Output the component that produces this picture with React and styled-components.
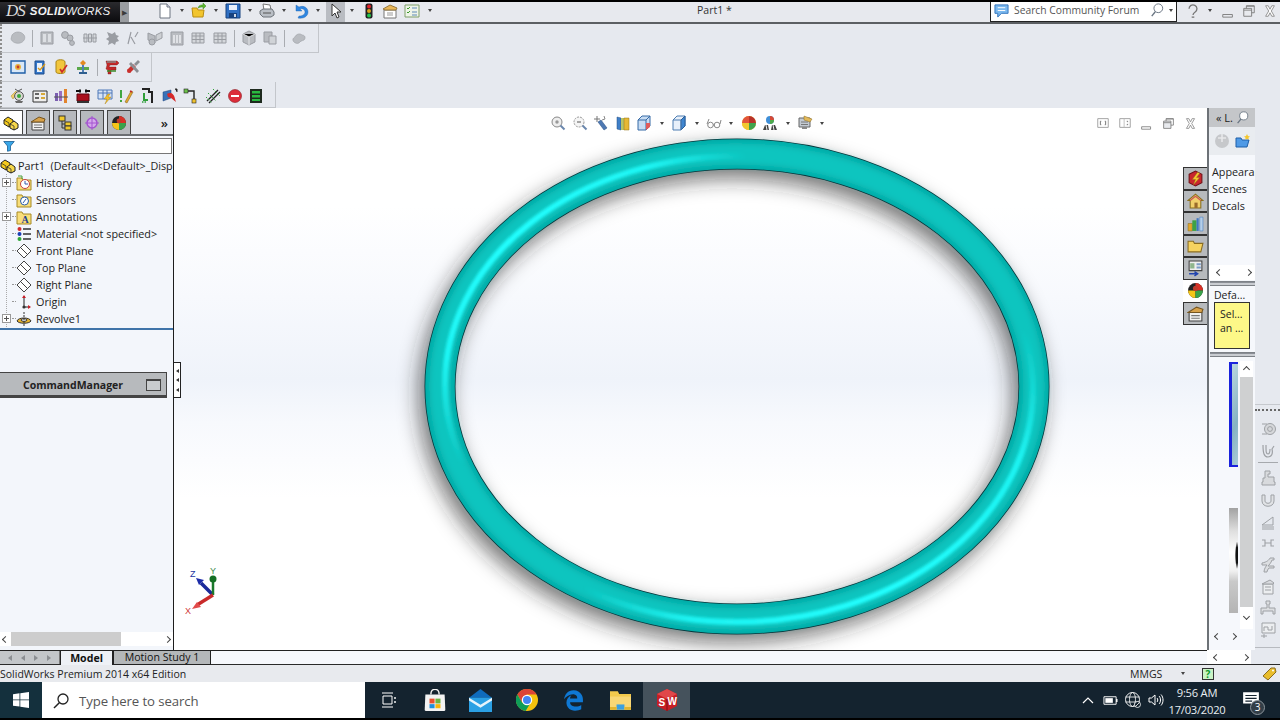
import React from 'react';
import styled, { createGlobalStyle } from 'styled-components';
import { FaEdgeLegacy } from 'react-icons/fa';

const Global = createGlobalStyle`
  html, body { margin: 0; padding: 0; background: #000; }
  * { box-sizing: border-box; }
`;

const ui = `"Open Sans", "Noto Sans", "Liberation Sans", sans-serif`;

const Page = styled.div`
  width: 1280px; height: 720px; overflow: hidden; display: flex; flex-direction: column;
  background: #e6e9ef; font-family: ${ui}; font-size: 11px; color: #1c1c1c;
`;
const Letterbox = styled.div`height: 2px; flex: none; background: #000;`;

/* ---------- title bar ---------- */
const TitleBar = styled.header`
  height: 22px; flex: none; display: flex; align-items: stretch; background: #e7e9ee;
  border-bottom: 2px solid #5c5f63; position: relative;
`;
const Brand = styled.div`
  width: 120px; background: linear-gradient(#2a2a2e, #0b0b0e); color: #f2f2f2; display: flex; align-items: center;
  padding: 0 0 2px 6px; gap: 5px; font-family: "Liberation Sans", sans-serif; font-style: italic; white-space: nowrap;
`;
const BrandMark = styled.span`font-family: "Liberation Serif", serif; font-size: 17px; letter-spacing: -1px; color: #ddd;`;
const BrandName = styled.span`font-size: 11.5px; font-weight: 400; letter-spacing: .2px; b { font-weight: 700; }`;
const BrandHandle = styled.div`
  width: 9px; background: #9a9da1; color: #3b3b3b; display: flex; align-items: center; justify-content: center; font-size: 7px;
`;
const Quick = styled.div`display: flex; align-items: center; margin-left: 27px;`;
const Cell = styled.div`
  width: ${p => p.$w || 17}px; height: 20px; flex: none; display: flex; align-items: center; justify-content: center;
  padding-bottom: 3px; background: ${p => p.$on ? '#b9bcc2' : 'transparent'};
`;
const Caret = styled.span`
  width: 0; height: 0; border-left: 2.5px solid transparent; border-right: 2.5px solid transparent;
  border-top: 3px solid #444; flex: none;
`;
const DocName = styled.div`
  position: absolute; left: 697px; top: 1px; font-size: 10.5px; color: #333;
`;
const TitleRight = styled.div`margin-left: auto; display: flex; align-items: center;`;
const Search = styled.div`
  width: 187px; height: 20px; background: #fff; border: 1px solid #222; border-top: none; display: flex; align-items: center;
  padding: 0 3px 3px 3px; margin-right: 5px; font-size: 10.3px; color: #555; gap: 5px; white-space: nowrap;
`;
const SearchText = styled.span`flex: 1;`;
const WinBtn = styled.div`width: 21px; height: 20px; padding-bottom: 3px; display: flex; justify-content: center; align-items: center;`;

/* ---------- toolbars ---------- */
const Toolbars = styled.section`height: 84px; flex: none; display: flex; flex-direction: column; background: #e6e9ef;`;
const ToolRow = styled.div`
  height: ${p => p.$h || 29}px; width: ${p => p.$w}px; display: flex; align-items: center; padding-left: 5px;
  padding-top: ${p => p.$pt || 0}px;
  border-right: 1px solid #c3c6cb; border-bottom: 1px solid #c3c6cb;
  border-left: 2px dotted #8d8d8d; background-clip: padding-box;
`;
const ToolBtn = styled.div`width: 21.7px; height: 22px; flex: none; display: flex; align-items: center; justify-content: center;`;
const ToolSep = styled.div`width: 1px; height: 17px; background: #a9acb1; margin: 0 3px; flex: none;`;

/* ---------- work area ---------- */
const Work = styled.main`height: 542px; flex: none; display: flex;`;

const Manager = styled.aside`
  width: 174px; flex: none; background: #f3f6fb; border-right: 1px solid #1d1d1d; display: flex; flex-direction: column;
`;
const MgrTabs = styled.div`
  height: 28px; flex: none; background: #e6e9ef; border-bottom: 2px solid #6b6e72; border-top: 1px solid #a8abb0;
  display: flex; align-items: flex-end; padding-right: 4px; gap: 3px;
`;
const MgrTab = styled.div`
  width: ${p => p.$on ? 23 : 24}px; height: 24px; display: flex; align-items: center; justify-content: center;
  background: ${p => p.$on ? '#fff' : '#b6b9bd'}; border: 1px solid #444; border-left: ${p => p.$on ? 'none' : '1px solid #444'};
  border-bottom: none;
`;
const MgrMore = styled.div`margin-left: auto; align-self: center; font-size: 13px; font-weight: 600; color: #222; padding-right: 1px; line-height: 1; margin-top: 3px;`;
const Filter = styled.div`
  height: 16px; margin: 2px 1px 0 0; flex: none; background: #fff; border: 1px solid #777; border-left: none; padding-left: 3px;
  display: flex; align-items: center;
`;
const Tree = styled.div`
  margin-top: 3px; border-bottom: 2px solid #3f74a9;
  background: linear-gradient(#aaa 50%, transparent 50%) 6px 17px / 1px 2px repeat-y;
  height: 173px;
`;
const Row = styled.div`
  height: 17px; display: flex; align-items: center; padding-left: ${p => p.$root ? 0 : 1}px; white-space: nowrap; overflow: hidden;
  font-size: 10.8px; color: #222; background: ${p => p.$root ? '#f3f6fb' : 'transparent'};
`;
const ExpCell = styled.div`width: 11px; flex: none; display: flex; justify-content: center;`;
const Plus = styled.div`
  width: 9px; height: 9px; background: #fff; border: 1px solid #999;
  background-image: linear-gradient(#555,#555), linear-gradient(#555,#555);
  background-size: 5px 1px, 1px 5px; background-position: center; background-repeat: no-repeat;
`;
const Stub = styled.div`width: 4px; flex: none; border-top: 1px dotted #999;`;
const RowIcon = styled.div`width: 16px; height: 16px; flex: none; margin-right: 4px; display: flex;`;
const RootIcon = styled.div`width: 16px; height: 16px; flex: none; margin-right: 2px; display: flex;`;
const CmdBar = styled.div`
  margin-top: 42px; width: 167px; height: 26px; flex: none; background: #b7babd; border: 1px solid #444; border-left: none;
  border-bottom-width: 3px; display: flex; align-items: center; font-weight: 700; font-size: 10.5px; color: #222; padding-top: 1px;
`;
const CmdLabel = styled.span`width: 146px; text-align: center;`;
const CmdIcon = styled.div`width: 15px; height: 12px; border: 1px solid #444; border-top-width: 2px; background: #c9ccce;`;
const Filler = styled.div`flex: 1;`;
const HScroll = styled.div`
  height: 14px; margin-bottom: 4px; flex: none; background: #fff; display: flex; align-items: center; justify-content: space-between;
`;
const Thumb = styled.div`width: 110px; height: 14px; background: #cdcdcd; margin-left: -42px;`;
const Chev = styled.span`
  width: 5px; height: 5px; border-left: 1.5px solid #444; border-bottom: 1.5px solid #444; flex: none; display: block;
  transform: rotate(${p => p.$dir === 'r' ? 225 : p.$dir === 'u' ? 135 : p.$dir === 'd' ? -45 : 45}deg);
  margin: 0 3px;
`;

const Canvas = styled.section`
  flex: 1; position: relative; min-width: 0;
  background: linear-gradient(#fff 0, #fff 18%, #f7f9fd 35%, #eff3fa 50%, #f7f9fd 58%, #fff 72%, #fff 100%);
`;
const Scene = styled.svg`display: block; width: 100%; height: 100%;`;
const HudBar = styled.div`position: absolute; left: 373px; top: 6px; display: flex; align-items: center;`;
const HudBtn = styled.div`
  width: ${p => p.$w || 21.8}px; height: 18px; flex: none; display: flex; align-items: center; justify-content: center;
`;
const ViewCtl = styled.div`position: absolute; right: 6px; top: 6px; display: flex; align-items: center;`;
const ViewBtn = styled.div`width: 21.8px; height: 18px; display: flex; align-items: center; justify-content: center;`;
const Triad = styled.svg`position: absolute; left: 10px; top: 457px;`;
const Notch = styled.div`
  position: absolute; left: 0; top: 254px; width: 7px; height: 36px; background: #fff; border: 1px solid #222; border-left: none;
  display: flex; flex-direction: column; justify-content: space-evenly; align-items: center;
`;
const NotchTri = styled.span`
  width: 0; height: 0; border-top: 2.5px solid transparent; border-bottom: 2.5px solid transparent; border-right: 3px solid #333;
`;
const PaneTabs = styled.div`position: absolute; right: 0; top: 59px; width: 24px; display: flex; flex-direction: column;`;
const PaneTab = styled.div`
  height: 22.5px; display: flex; align-items: center; justify-content: center;
  background: ${p => p.$on ? '#fff' : '#b7babd'}; border: 1px solid #333; border-right: none;
  ${p => p.$on && 'border-color: transparent;'}
`;

const Divider = styled.div`width: 2px; flex: none; background: #6d7277;`;
const Pane = styled.aside`width: 46px; flex: none; background: #f6f8fc; display: flex; flex-direction: column;`;
const PaneHead = styled.div`
  height: 19px; flex: none; background: #c4c6c9; display: flex; align-items: center; padding-left: 7px; color: #222;
  font-size: 11px; overflow: hidden; white-space: nowrap;
`;
const PaneTools = styled.div`height: 28px; flex: none; background: #e9ecf0; display: flex; align-items: center; gap: 5px; padding: 0 4px 0 5px;`;
const PaneList = styled.div`height: 110px; flex: none; padding: 8px 0 0 3px; overflow: hidden; white-space: nowrap;`;
const PaneItem = styled.div`height: 17px; line-height: 17px; font-size: 10.8px; color: #222;`;
const Pager = styled.div`
  height: ${p => p.$h || 15}px; flex: none; background: ${p => p.$bg || '#fff'}; display: flex; align-items: center;
  padding-left: ${p => p.$pl ?? 5}px; gap: ${p => p.$gap ?? 18}px;
`;
const Rule = styled.div`
  height: 5px; margin: ${p => p.$mt ?? 1}px 0 0 1px; flex: none;
  background: repeating-linear-gradient(#8a8e95 0 1px, #c9ccd1 1px 3px); border-top: 1px solid #7d8187; border-bottom: 1px solid #7d8187;
`;
const PaneTitle = styled.div`height: 16px; flex: none; padding: 3px 0 0 5px; font-size: 10.5px; line-height: 13px; color: #222;`;
const Hint = styled.div`
  height: 47px; width: 36px; flex: none; margin-left: 5px; padding: 4px 0 0 5px; background: #fdf888; border: 1px solid #333;
  font-size: 10.5px; line-height: 14px; color: #222;
`;
const Gallery = styled.div`height: 268px; flex: none; display: flex; margin-top: 4px;`;
const Thumbs = styled.div`width: 31px; flex: none; padding: 1px 0 0 20px; display: flex; flex-direction: column; gap: 41px;`;
const SwatchA = styled.div`
  width: 9px; height: 105px; flex: none; border: 2px solid #1a22dc; border-left-width: 3px; border-right: none;
  background: linear-gradient(115deg, #b9d6df, #86b3c4 60%, #a9ccd7);
`;
const SwatchB = styled.div`
  width: 9px; height: 105px; flex: none;
  background: radial-gradient(ellipse 2px 14px at 8px 45%, #111 60%, transparent 100%),
    linear-gradient(#a2a2a2, #dfdfdf 22%, #fff 42%, #f0f0f0 60%, #c9c9c9 70%, #b4b4b4);
`;
const VScroll = styled.div`width: 13px; flex: none; display: flex; flex-direction: column; align-items: center; background: #fff;`;
const VEnd = styled.div`height: ${p => p.$h}px; width: 100%; flex: none; display: flex; align-items: center; justify-content: center;`;
const VTrack = styled.div`height: 230px; width: 100%; flex: none; background: #cfd0d1;`;
const Strip = styled.aside`
  width: 25px; flex: none; background: #e6e9ef; display: flex; flex-direction: column; align-items: center;
`;
const StripTop = styled.div`height: 297px; width: 100%; flex: none; border-bottom: 1px solid #c6c9ce;`;
const StripDots = styled.div`height: 3px; width: 100%; margin: 4px 0 6px; flex: none; border-top: 2px dotted #666;`;
const StripBtn = styled.div`height: 21.7px; width: 100%; flex: none; display: flex; align-items: center; justify-content: center;`;
const StripSep = styled.div`height: 1px; width: 20px; flex: none; background: #a6a9ad; margin: 1px 0 4px;`;
const StripFoot = styled.div`margin-top: auto; margin-bottom: 2px; height: 1px; width: 100%; flex: none; background: #b7babf;`;

/* ---------- bottom ---------- */
const TabBar = styled.div`height: 15px; flex: none; display: flex; border-bottom: 1px solid #2a2a2a;`;
const Tabs = styled.div`width: 1207px; flex: none; display: flex; background: #f6f8fc; border-top: 1px solid #222;`;
const NavArrows = styled.div`width: 60px; flex: none; background: #c3c6c9; display: flex; align-items: center; justify-content: space-around; padding: 0 3px; border-right: 1px solid #777;`;
const NavTri = styled.span`
  width: 0; height: 0; border-top: 3px solid transparent; border-bottom: 3px solid transparent;
  ${p => p.$r ? 'border-left: 4px solid #8b8e92;' : 'border-right: 4px solid #8b8e92;'}
`;
const DocTab = styled.div`
  height: 14px; display: flex; align-items: center; justify-content: center; white-space: nowrap; font-size: 10.6px; line-height: 1;
  width: ${p => p.$w}px; flex: none; color: #111;
  background: ${p => p.$on ? '#eef1f6' : '#b4b7b9'}; font-weight: ${p => p.$on ? 700 : 400};
  border: 1px solid #222; border-top: none; ${p => p.$on ? 'border-bottom: none;' : ''}
`;
const Status = styled.footer`
  height: 17px; flex: none; background: #e8eaee; display: flex; align-items: center; font-size: 10.5px; color: #222; white-space: nowrap;
`;
const StatusText = styled.span`flex: 1;`;
const StatusUnit = styled.span`width: 51px;`;
const StatusHelp = styled.div`
  width: 12px; height: 12px; margin: 0 47px 0 17px; border: 1px solid #333; background: #c9f3c5; color: #0d9a2b; font-weight: 700;
  font-size: 10px; line-height: 10px; text-align: center;
`;
const StatusTag = styled.div`width: 16px; height: 16px; margin-right: 3px; flex: none;`;
const Taskbar = styled.nav`height: 36px; flex: none; background: #14232f; display: flex; align-items: stretch; color: #fff;`;
const Start = styled.div`width: 42px; flex: none; background: #14303d; display: flex; align-items: center; justify-content: center;`;
const SearchBox = styled.div`
  width: 323px; flex: none; background: #fff; display: flex; align-items: center; padding: 1px 0 0 11px; gap: 10px;
  color: #555; font-size: 13.2px; letter-spacing: -.1px; font-family: "Open Sans", sans-serif;
`;
const TaskApp = styled.div`
  width: 46.4px; flex: none; display: flex; align-items: center; justify-content: center;
  background: ${p => p.$on ? '#45525c' : 'transparent'};
`;
const Tray = styled.div`margin-left: auto; display: flex; align-items: stretch;`;
const TrayBtn = styled.div`width: 22.6px; flex: none; display: flex; align-items: center; justify-content: center;`;
const Clock = styled.div`
  width: 60px; margin-right: 6px; padding-top: 2px; text-align: center; font-size: 11.2px; letter-spacing: -.25px; line-height: 17px;
  color: #e9eef2; white-space: nowrap;
`;
const Notify = styled.div`width: 47px; flex: none; display: flex; align-items: center; justify-content: center; position: relative; padding-right: 11px;`;
const NotifyBadge = styled.span`
  position: absolute; left: 17px; top: 18px; width: 15px; height: 15px; border-radius: 50%; background: #333e47; border: 1px solid #8b949b;
  font-size: 10px; line-height: 13px; text-align: center; color: #fff;
`;

/* ---------- icons ---------- */
const Svg = styled.svg`display: block; flex: none;`;
const g = '#b9bcc1', gd = '#9a9da3';
const D = {
  page: <><path d="M3 1h7l3 3v11H3z" fill="#fff" stroke="#6c7480"/><path d="M10 1v3h3" fill="#dde" stroke="#6c7480"/></>,
  openf: <><path d="M1 5h5l1 2h6l-1 7H2z" fill="#f2c52e" stroke="#b98d12"/><path d="M7 5c1-3 3-3 5-3V0l3 3-3 3V4c-2 0-3 0-5 1z" fill="#5bb531" stroke="#3d8a1d" strokeWidth=".5"/></>,
  save: <><path d="M1 1h14v14H1z" fill="#2f6fc2" stroke="#17427f"/><path d="M4 2h8v5H4z" fill="#e9f0fa"/><path d="M4 10h8v5H4z" fill="#17427f"/><path d="M9 11h2v3H9z" fill="#cfd9e6"/></>,
  print: <><path d="M4 1l7 1 1 5H5z" fill="#fff" stroke="#777"/><path d="M1 8l3-2h9l2 3v3l-3 2H4l-3-3z" fill="#b9bec5" stroke="#6d7279"/><path d="M4 10h8" stroke="#555"/></>,
  undo: <path d="M3 2v6h6L7 6c3-1 5 1 5 3 0 2-2 4-6 4l-1 2c6 1 10-2 10-6 0-4-4-7-9-5z" fill="#2f86e0" stroke="#1c5fae" strokeWidth=".4"/>,
  cursor: <path d="M4 1v12l3-3 2 5 2-1-2-5h4z" fill="#fff" stroke="#333"/>,
  traffic: <><rect x="4.5" y="0.5" width="7" height="15" rx="2" fill="#222"/><circle cx="8" cy="3.5" r="2" fill="#e2242a"/><circle cx="8" cy="8" r="2" fill="#d9a21d"/><circle cx="8" cy="12.5" r="2" fill="#22c44a"/></>,
  options: <><path d="M2 7h12v8H2z" fill="#fff" stroke="#777"/><path d="M1 6l7-4 7 3-1 2H3z" fill="#e8b657" stroke="#94763a"/><path d="M5 10h6M5 12h6" stroke="#999"/></>,
  checklist: <><path d="M1 2h14v12H1z" fill="#eef4e8" stroke="#7ea06a"/><path d="M3 5l1 1 2-2M3 9l1 1 2-2" stroke="#3b9a2a" fill="none"/><path d="M8 5h5M8 9h5M8 12h5" stroke="#5c8ab8"/></>,
  chat: <><path d="M1 2h14v9H8l-4 4v-4H1z" fill="#7ab8ee" stroke="#2f72bd"/><path d="M4 5h8M4 8h8" stroke="#fff"/></>,
  mag: <><circle cx="9.5" cy="6" r="5" fill="#fff" stroke="#6a7683" strokeWidth="1.1"/><path d="M6 10l-4 5" stroke="#6a7683" strokeWidth="1.6"/></>,
  help: <><path d="M3.500 5.500a4.500 4.500 0 1 1 7 3.700C9 10.200 8 11 8 12.500" fill="none" stroke="#777" strokeWidth="1.500"/><path d="M6.500 15h3" stroke="#777" strokeWidth="1.500"/></>,
  min: <path d="M2 12h11v3H2z" fill="none" stroke="#777"/>,
  restore: <><path d="M5 2h9v8H5z" fill="none" stroke="#777"/><path d="M2 5h9v9H2z" fill="#e8eaee" stroke="#777"/><path d="M2 7h9M5 2.5h9" stroke="#777"/></>,
  close: <path d="M3 2l3 0 2 4 2-4h3l-3.5 6L13 14h-3l-2-4-2 4H3l3.5-6z" fill="#fff" stroke="#888"/>,

  gblob: <path d="M2 5c3-4 9-4 12 0 2 3 0 7-4 8-4 1-8-1-9-4z" fill={g} stroke={gd} strokeWidth=".6"/>,
  gpanel: <><path d="M2 2h12v12H2z" fill={g} stroke={gd}/><path d="M4 4h3v8H4zM9 4h3v8H9z" fill="#dcdfe3"/></>,
  ggears: <><circle cx="5" cy="5" r="3.4" fill={g} stroke={gd}/><circle cx="10" cy="8" r="3" fill={g} stroke={gd}/><circle cx="12" cy="13" r="2.4" fill={g} stroke={gd}/></>,
  gpins: <><path d="M2 4h3v8H2zM6.5 4h3v8h-3zM11 4h3v8h-3z" fill="#d4d7db" stroke={gd}/><path d="M1 8h14" stroke={gd}/></>,
  gburst: <path d="M3 2l5 2 3-2 1 3 3 1-2 2 2 3-3 1-1 3-3-2-4 2 1-4-3-2 3-2z" fill={gd}/>,
  gsketch: <path d="M3 14l3-12M6 7l4 7M13 2l-3 5" stroke={gd} fill="none" strokeWidth="1.2"/>,
  gwheel: <><path d="M1 3l7 3v7l-7-3z" fill={g} stroke={gd}/><path d="M9 5l6-3v6l-6 3z" fill="#cdd0d4" stroke={gd}/><circle cx="5" cy="12" r="3" fill={g} stroke={gd}/></>,
  gcols: <><path d="M2 2h12v13H2z" fill={g} stroke={gd}/><path d="M4 5h2v8H4zM7 5h2v8H7zM10 5h2v8h-2z" fill="#e0e2e6"/></>,
  gtable: <><path d="M2 3h12v10H2z" fill="#d4d7db" stroke={gd}/><path d="M2 6h12M2 9.5h12M6 3v10M10 3v10" stroke={gd}/></>,
  gcube: <><path d="M2 4l6-3 6 3v8l-6 3-6-3z" fill={g} stroke={gd}/><path d="M2 4l6 3 6-3M8 7v8" stroke="#e4e6e9"/></>,
  gcubes: <><path d="M2 2h8v10H2z" fill={g} stroke={gd}/><path d="M7 6h7v8H7z" fill="#d0d3d7" stroke={gd}/></>,
  gcloud: <path d="M3 12c-2-2-1-4 1-5 1-3 5-4 7-2 3 0 4 3 2 5-2 1-4 1-5 3-2 1-4 0-5-1z" fill={g} stroke={gd} strokeWidth=".6"/>,

  view: <><path d="M1 2h14v12H1z" fill="#d8e7f7" stroke="#1f5fa8" strokeWidth="1.4"/><circle cx="8" cy="8" r="3" fill="#e8b13a"/><circle cx="8" cy="8" r="1.4" fill="#c73c2c"/></>,
  clipb: <><path d="M3 2h9v13H3z" fill="#3477c9" stroke="#1a4b8a"/><path d="M5 4h5v9H5z" fill="#e9f1fb"/><path d="M6 9l2 2 5-6" stroke="#d89a1c" strokeWidth="1.4" fill="none"/></>,
  cyl: <><path d="M3 3c0-3 9-3 9 0v10c0 2-9 2-9 0z" fill="#f2c63d" stroke="#a98415"/><path d="M7 10l2 3 5-7" stroke="#cc2a2a" strokeWidth="1.6" fill="none"/></>,
  tree: <><path d="M8 1l3 3-3 3-3-3z" fill="#e28a22"/><path d="M7 6h2v8H7z" fill="#4f7fb7"/><path d="M2 8h5v3H2zM9 8h5v3H9z" fill="#5aa84a"/><path d="M4 13h8v2H4z" fill="#2f5f8f"/></>,
  redtool: <><path d="M2 2h11l2 2-2 2H6L5 8h7v3H7v4H4v-4l-2-1 1-4z" fill="#c52828" stroke="#731313" strokeWidth=".4"/><path d="M3 3h9" stroke="#888" strokeWidth="1.5"/><path d="M3 12l9 0" stroke="#3b8b2a" strokeWidth="1.5"/></>,
  wrench: <><path d="M2 11l6-6 3 3-6 6z" fill="#c9302c"/><path d="M9 5l4-4 2 2-4 4zM6 3l8 9-2 2-8-9z" fill="#8c8f94"/><circle cx="4" cy="12" r="2" fill="#c9302c"/></>,

  feat: <><path d="M1 8l5-5 1 2-4 6z" fill="#f0cf6a" stroke="#a88a2a" strokeWidth=".5"/><circle cx="9" cy="8" r="4.4" fill="#d9d9d2" stroke="#555"/><circle cx="9" cy="8" r="2" fill="#3aa63a"/><path d="M5 13h8l-1 2H6z" fill="#6a6a6a"/><path d="M5 1l3 2 4-2" stroke="#555" fill="none"/></>,
  form: <><path d="M1 3h14v11H1z" fill="#eee" stroke="#333"/><path d="M3 5h4v2H3zM3 9h4v2H3z" fill="#666"/><path d="M9 5h4v2H9zM9 9h4v2H9z" fill="#d7a93a"/></>,
  cols: <><path d="M2 5h3v8H2z" fill="#7b5fb0"/><path d="M6 3h3v10H6z" fill="#9a6fc0"/><path d="M11 1h3v14h-3z" fill="#e2832c"/><path d="M1 9h14" stroke="#555"/></>,
  redbox: <><path d="M2 6h12v7H2z" fill="#a90f1c" stroke="#5e0710"/><path d="M2 14h12" stroke="#333" strokeWidth="2"/><path d="M1 3h5M10 3h5" stroke="#111" strokeWidth="2"/><path d="M5 1v4M11 1v4" stroke="#111"/></>,
  tbolt: <><path d="M1 2h14v9H1z" fill="#d7e3f5" stroke="#4f78b8"/><path d="M1 5h14M6 2v9M10 2v9" stroke="#4f78b8"/><path d="M11 6l-4 5h3l-2 5 6-7h-3l2-3z" fill="#f2bf2a" stroke="#a77c10" strokeWidth=".4"/></>,
  linep: <><path d="M3 2v8M3 12v2" stroke="#2fa02f" strokeWidth="1.8"/><path d="M7 14l6-11 2 1-6 11z" fill="#e4a82c" stroke="#775a14" strokeWidth=".5"/><path d="M12 3l2 1" stroke="#c02a2a" strokeWidth="1.5"/></>,
  stairs: <><path d="M2 1h7v3h3v11" fill="none" stroke="#222" strokeWidth="2"/><path d="M4 5v7h4" fill="none" stroke="#2e9e38" strokeWidth="2"/><path d="M2 14h5" stroke="#2e9e38" strokeWidth="1.5" strokeDasharray="1.5 1"/></>,
  blured: <><path d="M1 4l8-2v8l-8 3z" fill="#3a72b8" stroke="#1d467f" strokeWidth=".5"/><path d="M5 6c3-2 7-1 8 5l1 3-5-4-3-1z" fill="#d62a2a"/><path d="M13 1h2v3" stroke="#333"/></>,
  route: <><path d="M3 3h8v9" fill="none" stroke="#222" strokeWidth="1.4"/><rect x="1" y="1" width="4" height="4" fill="#6cc04a" stroke="#222" strokeWidth=".6"/><rect x="9" y="11" width="4" height="4" fill="#f0c22e" stroke="#222" strokeWidth=".6"/></>,
  hatch: <><path d="M2 13L13 2M4 15L15 4" stroke="#222" strokeWidth="1.4"/><path d="M1 9l6 6M3 5l8 8M8 1l7 7" stroke="#36a43c" strokeDasharray="1.5 1.2"/></>,
  stop: <><circle cx="8" cy="8" r="6.5" fill="#dc2e3a" stroke="#8a1720" strokeWidth=".6"/><path d="M4 7h8v2H4z" fill="#fff"/></>,
  bars: <><path d="M2 1h12v14H2z" fill="#1e2a1e"/><path d="M4 3h8v2.5H4zM4 7h8v2.5H4zM4 11h8v2H4z" fill="#29b83f"/></>,

  tabFeature: <><path d="M1 5l4-3 5 3v4l-4 3-5-3z" fill="#f3c91d" stroke="#222"/><path d="M7 9l4-3 4 3v4l-4 2-4-2z" fill="#f7d84a" stroke="#222"/><path d="M1 5l5 3v4M7 9l4 2v4" fill="none" stroke="#222" strokeWidth=".7"/></>,
  tabProp: <><path d="M2 7h12v8H2z" fill="#f0f0f0" stroke="#444"/><path d="M1 7l8-5 6 2-1 3z" fill="#d8a24a" stroke="#755520"/><path d="M4 10h8M4 12.5h8" stroke="#777"/></>,
  tabConf: <><rect x="2" y="1" width="6" height="5" fill="#f0c92c" stroke="#333"/><rect x="8" y="7" width="6" height="4" fill="#f0c92c" stroke="#333"/><rect x="8" y="11" width="6" height="4" fill="#f0c92c" stroke="#333"/><path d="M5 6v7h3M5 9h3" stroke="#333" fill="none"/></>,
  tabDim: <><circle cx="8" cy="8" r="5" fill="#d5a8ec" stroke="#a454d0" strokeWidth="1.5"/><path d="M8 1v14M1 8h14" stroke="#a454d0"/></>,
  tabDisplay: <><circle cx="8" cy="8" r="7" fill="#222"/><path d="M8 1a7 7 0 0 1 7 7H8z" fill="#d93025"/><path d="M1 8a7 7 0 0 0 7 7V8z" fill="#f5c518"/><path d="M8 8h7a7 7 0 0 1-7 7z" fill="#38a34a"/><circle cx="8" cy="6" r="2.4" fill="#bf3a2b"/></>,
  filter: <path d="M1 2h14l-5 6v6l-4 1V8z" fill="#39a7e8" stroke="#11558d"/>,
  hist: <><path d="M1 3h5l1 2h8v10H1z" fill="#f8de7a" stroke="#a78a24"/><circle cx="9" cy="9" r="4.5" fill="#fff" stroke="#c74040"/><path d="M9 6v3h3" stroke="#3759a8" fill="none"/><path d="M2 1h4v3" stroke="#48a03c" fill="none"/></>,
  sens: <><path d="M1 3h5l1 2h8v10H1z" fill="#f8de7a" stroke="#a78a24"/><circle cx="8.5" cy="9" r="4" fill="#fff" stroke="#2a5ca8"/><path d="M7 11l3-4" stroke="#2a5ca8"/></>,
  annot: <><path d="M1 3h5l1 2h8v10H1z" fill="#f8de7a" stroke="#a78a24"/><text x="5.5" y="14" fontSize="10" fontWeight="700" fontFamily="Liberation Serif" fill="#1d3f8f">A</text></>,
  mat: <><circle cx="3.5" cy="3" r="2" fill="#d42c2c"/><circle cx="3.5" cy="8" r="2" fill="#1b3fb7"/><circle cx="3.5" cy="13" r="2" fill="#2fa83a"/><path d="M7 3h8M7 8h8M7 13h8" stroke="#333" strokeWidth="1.4"/></>,
  plane: <><path d="M8 1l7 7-7 7-7-7z" fill="#fff" stroke="#444"/><path d="M4.5 4.5l7 7" stroke="#444"/></>,
  origin: <><path d="M8 2v11h6" fill="none" stroke="#222"/><path d="M8 1l-2 3h4z" fill="#c9212a"/><path d="M15 13l-3-2v4z" fill="#c9212a"/><circle cx="8" cy="13" r="1.6" fill="#333"/></>,
  rev: <><path d="M1 10c1-4 13-4 14 0-2 3-12 3-14 0z" fill="#e9b42b" stroke="#333"/><ellipse cx="8" cy="9" rx="3" ry="1.3" fill="#fff" stroke="#333"/><path d="M8 1v14" stroke="#333" strokeDasharray="2 1"/></>,

  hudZoom: <><circle cx="7" cy="7" r="5" fill="#eee" stroke="#888"/><circle cx="7" cy="7" r="1.7" fill="#999"/><path d="M10.5 10.5l4 4" stroke="#6a86ad" strokeWidth="2"/></>,
  hudZoom2: <><circle cx="7" cy="7" r="5" fill="#f5f5f5" stroke="#999" strokeDasharray="2 1"/><path d="M5 7h4" stroke="#555"/><path d="M10.5 10.5l4 4" stroke="#6a86ad" strokeWidth="2"/></>,
  hudPrev: <><path d="M5 7l6 8 3-2-6-8z" fill="#4e79b3" stroke="#234a80" strokeWidth=".5"/><path d="M4 1v6M1 4h6" stroke="#777"/><path d="M11 1l1 3-3 1" stroke="#888" fill="none"/></>,
  hudSect: <><path d="M2 2l4 1v12l-4-1z" fill="#3f7fc8" stroke="#204d80" strokeWidth=".5"/><path d="M6 3h3v12H6z" fill="#b7c46a"/><path d="M9 3h5v12H9z" fill="#e6b835" stroke="#907016" strokeWidth=".5"/></>,
  hudOrient: <><path d="M2 5l4-4h8v10l-4 4H2z" fill="#c7dcf3" stroke="#366aa6"/><path d="M2 5h8v10M10 5l4-4" stroke="#366aa6" fill="none"/><path d="M10 8h4v4l-4 3z" fill="#e05a5a"/></>,
  hudCube: <><path d="M2 5l4-4h8v10l-4 4H2z" fill="#e8f0fa" stroke="#4c7db2"/><path d="M10 5l4-4v10l-4 4z" fill="#3f86d0" stroke="#2b5f99"/><path d="M2 5h8v10" fill="none" stroke="#4c7db2"/></>,
  hudGlasses: <><circle cx="4.5" cy="10" r="2.8" fill="none" stroke="#888"/><circle cx="11" cy="10" r="2.8" fill="none" stroke="#888"/><path d="M1 9l2-5M14 9l1-4M7 10h1.5" stroke="#888" fill="none"/></>,
  hudBall: <><circle cx="8" cy="8" r="7" fill="#e9b523"/><path d="M8 1a7 7 0 0 0-7 7h7z" fill="#e2543b"/><path d="M8 1a7 7 0 0 1 7 7H8z" fill="#b8322a"/><path d="M1 8a7 7 0 0 0 7 7V8z" fill="#f0c830"/><path d="M8 8h7a7 7 0 0 1-7 7z" fill="#3fa34d"/></>,
  hudScene: <><circle cx="8" cy="5" r="4" fill="#3f8fd8"/><path d="M8 1a4 4 0 0 1 4 4H8z" fill="#d64a36"/><path d="M8 5h4a4 4 0 0 1-4 4z" fill="#4faa4a"/><path d="M1 15l2-5h3l1 5zM9 15l1-5h3l2 5z" fill="#444"/><path d="M4 10l1 5M11 10l1 5" stroke="#eee"/></>,
  hudSettings: <><path d="M2 3h11v9H2z" fill="#c3cad2" stroke="#666"/><path d="M5 12h5v2H5z" fill="#888"/><path d="M7 1l8 3-2 3-6-2z" fill="#e3b95a" stroke="#8a6d20" strokeWidth=".5"/><path d="M4 7h7M4 9.5h7" stroke="#777"/></>,
  vc1: <><path d="M2 3h12v10H2z" fill="none" stroke="#999"/><path d="M6 6h-1v4h1M10 6h1v4h-1" stroke="#666" fill="none"/></>,
  vc2: <><path d="M2 3h12v10H2z" fill="none" stroke="#999"/><path d="M7 3v10" stroke="#bbb"/><path d="M10 6h1v1M10 10h1V9" stroke="#666" fill="none"/></>,

  ptSw: <><path d="M2 4l6-3 6 3v8l-6 3-6-3z" fill="#c9272d" stroke="#701217"/><path d="M10 2L5 9h3l-2 5 6-7H9l3-4z" fill="#f5c92e" stroke="#8a6d20" strokeWidth=".4"/></>,
  ptHome: <><path d="M1 8l7-6 7 6h-2v7H3V8z" fill="#f1d06b" stroke="#8a6f1e"/><path d="M7 10h3v5H7z" fill="#9a6b2a"/><path d="M3 8l5-4 5 4" fill="none" stroke="#c55" /></>,
  ptLib: <><path d="M1 8h4v7H1z" fill="#e3a72c" stroke="#8a6d20" strokeWidth=".5"/><path d="M5 5h4v10H5z" fill="#3ea245"/><path d="M9 3h2v12H9z" fill="#3d77c4"/><path d="M12 2h3v13h-3z" fill="#b5cfe8" stroke="#3d77c4" strokeWidth=".5"/></>,
  ptFolder: <path d="M1 4h5l1 2h8l-2 8H1z" fill="#f6d360" stroke="#8a6d20"/>,
  ptView: <><path d="M2 1h12v9H2z" fill="#eee" stroke="#444"/><path d="M3 3h4v5H3z" fill="#8fb58c"/><path d="M9 3h4v2H9zM9 6h4v2H9z" fill="#7b9cc7"/><path d="M2 13h7M7 11l3 2-3 2" stroke="#2244b0" strokeWidth="1.4" fill="none"/></>,

  sGear: <><circle cx="10" cy="8" r="5.5" fill="#d5d7da" stroke="#9ea1a5"/><circle cx="10" cy="8" r="2.4" fill="none" stroke="#9ea1a5"/><path d="M2 3h5M2 13h5" stroke="#9ea1a5"/></>,
  sHook: <path d="M3 2c0 8 1 12 5 12s5-4 4-8l2-3M6 2c0 7 0 9 2 9s2-2 2-5" fill="none" stroke="#9ea1a5" strokeWidth="1.2"/>,
  sPipe: <path d="M5 1h5v3H8v3h6v5h1v3H2v-3h1V8h2z" fill="#d8dadd" stroke="#9ea1a5"/>,
  sMag: <path d="M2 3h3v6c0 3 6 3 6 0V3h3v6c0 7-12 7-12 0z" fill="#e0e2e5" stroke="#9ea1a5"/>,
  sWedge: <><path d="M2 11L13 3v8z" fill="none" stroke="#9ea1a5"/><path d="M2 13h12M2 15h12" stroke="#9ea1a5"/></>,
  sLink: <path d="M2 5h3v6H2M14 5h-3v6h3M5 8h6" fill="none" stroke="#9ea1a5" strokeWidth="1.1"/>,
  sElbow: <path d="M2 6c5-1 7-3 8-5h4v2h-2c-1 3-3 5-4 6h6v2H9c-1 1-2 3-2 4H4c0-3 2-6 3-7H2z" fill="#dcdee1" stroke="#9ea1a5"/>,
  sNote: <><path d="M3 5h10v10H3z" fill="#eceef0" stroke="#9ea1a5"/><path d="M2 5l8-4 4 3-1 1z" fill="#d8dade" stroke="#9ea1a5"/><path d="M5 8h6M5 11h6" stroke="#9ea1a5"/></>,
  sValve: <path d="M6 1h4v3H9v4h6v6h-2v-3H3v3H1V8h6V4H6z" fill="#dcdee1" stroke="#9ea1a5"/>,
  sChart: <><path d="M2 1h13v10H2z" fill="#eceef0" stroke="#9ea1a5"/><path d="M4 9V5h4v3h4V4" fill="none" stroke="#9ea1a5"/><path d="M1 14h6M4 12v4" stroke="#9ea1a5"/></>,
  sPaneA: <><circle cx="8" cy="8" r="7" fill="#c6c8cb"/><path d="M8 1v8M4 5h8" stroke="#e7e8ea" strokeWidth="1.6"/></>,
  sPaneB: <><path d="M1 5h5l1 2h7l-2 7H1z" fill="#4f9ae6" stroke="#1f5fa8"/><path d="M12 1l1 2 2 .4-1.6 1.4.4 2-1.8-1-1.8 1 .4-2L9 3.4l2-.4z" fill="#f4c62c"/></>,
  tag: <><path d="M2 10l8-8 4 0 1 4-8 8z" fill="#e9bd2b" stroke="#8a6d20"/><circle cx="12" cy="4.500" r="1" fill="#fff"/></>,
};
const I = ({ n, s = 16 }) => <Svg width={s} height={s} viewBox="0 0 16 16">{D[n]}</Svg>;

const TASKPATHS = {
  win: <path d="M0 2.2L6.5 1.3v6.2H0zM7.3 1.2L16 0v7.5H7.3zM0 8.3h6.5v6.3L0 13.7zM7.3 8.3H16V16l-8.7-1.2z" fill="#fff"/>,
  search: <><circle cx="10" cy="6" r="5" fill="none" stroke="#222" strokeWidth="1.3"/><path d="M6.3 9.7L1 15" stroke="#222" strokeWidth="1.5"/></>,
  view: <><path d="M3 4h9v8H3z" fill="none" stroke="#fff"/><path d="M2 1h11M2 15h11" stroke="#fff" strokeWidth="1.2"/><path d="M15 5v2M15 9v2" stroke="#fff" strokeWidth="1.4"/></>,
  store: <><path d="M6 4c0-5 6-5 6 0" fill="none" stroke="#f3f3f3" transform="translate(-1 0)"/><path d="M1 4h14l.5 11a1 1 0 0 1-1 1h-13a1 1 0 0 1-1-1z" fill="#f3f3f3"/><path d="M4 7h3.7v3.5H4z" fill="#e8502f"/><path d="M8.3 7H12v3.5H8.3z" fill="#6db33f"/><path d="M4 11h3.7v3H4z" fill="#1f8fdb"/><path d="M8.3 11H12v3H8.3z" fill="#f7b50c"/></>,
  mail: <><path d="M0 6L8 0l8 6z" fill="#0f6cbd"/><path d="M0 6h16v10H0z" fill="#2ba0e4"/><path d="M0 6l8 5 8-5v2l-8 5-8-5z" fill="#e7f4fb"/></>,
  chrome: <><circle cx="8" cy="8" r="8" fill="#f4c20d"/><path d="M8 0a8 8 0 0 0-7 4l3.5 6L8 4h7a8 8 0 0 0-7-4z" fill="#db4437"/><path d="M1 4a8 8 0 0 0 6 12l3.6-6H4.5z" fill="#0f9d58"/><circle cx="8" cy="8" r="3.8" fill="#fff"/><circle cx="8" cy="8" r="2.9" fill="#4285f4"/></>,
  files: <><path d="M0 1h6l1 2h9v12H0z" fill="#f2c94c"/><path d="M0 5h16v10H0z" fill="#f8d775"/><path d="M5 11h6v4H5z" fill="#3aa0e0"/><path d="M0 13h5v2H0zM11 13h5v2h-5z" fill="#e2b52e"/></>,
  battery: <><path d="M1 4h13v8H1z" fill="none" stroke="#fff"/><path d="M14 6.5h1.5v3H14z" fill="#fff"/><path d="M2.5 5.5h8v5h-8z" fill="#fff"/></>,
  globe: <><circle cx="7.5" cy="7.5" r="7" fill="none" stroke="#fff" strokeWidth=".9"/><ellipse cx="7.5" cy="7.5" rx="3" ry="7" fill="none" stroke="#fff" strokeWidth=".8"/><path d="M.5 5h14M.5 10h14" stroke="#fff" strokeWidth=".8"/><circle cx="12.5" cy="12.5" r="3" fill="#14232f" stroke="#fff" strokeWidth=".8"/><path d="M10.5 14.5l4-4" stroke="#fff" strokeWidth=".8"/></>,
  speaker: <><path d="M1 6h2.5L7 3v10L3.500 10H1z" fill="none" stroke="#fff"/><path d="M9 6c1 1 1 3 0 4M11 4c2 2 2 6 0 8M13 2.500c2.700 3 2.700 8 0 11" fill="none" stroke="#fff"/></>,
  notif: <><path d="M1 1h14v10h-5l-2 3v-3H1z" fill="#fff"/><path d="M3 4h10M3 6.500h10M3 9h6" stroke="#14232f"/></>,
};
const T = ({ n, s = 16 }) => <Svg width={s} height={s} viewBox="0 0 16 16">{TASKPATHS[n]}</Svg>;

const SwCube = () => (
  <Svg width="24" height="24" viewBox="0 0 24 24">
    <path d="M2 6l10-5 10 5v12l-10 5-10-5z" fill="#c81e24"/>
    <path d="M2 6l10-5 10 5-10 5z" fill="#e0474a"/>
    <path d="M12 11v12" stroke="#7e0e12"/>
    <text x="3.500" y="18" fontSize="10" fontWeight="700" fontFamily="Liberation Sans" fill="#fff">S</text>
    <text x="12.500" y="17" fontSize="10" fontWeight="700" fontFamily="Liberation Sans" fill="#fff">W</text>
  </Svg>
);

const Ring = () => (
  <Scene viewBox="0 0 1033 542" aria-hidden="true">
    <defs>
      <filter id="shadow" x="-20%" y="-20%" width="140%" height="140%"><feGaussianBlur stdDeviation="10"/></filter>
      <filter id="soft" x="-10%" y="-10%" width="120%" height="120%"><feGaussianBlur stdDeviation="3"/></filter>
      <filter id="softer" x="-10%" y="-10%" width="120%" height="120%"><feGaussianBlur stdDeviation="1.6"/></filter>
      <radialGradient id="glintA" gradientUnits="userSpaceOnUse" cx="330" cy="110" r="250">
        <stop offset="0" stopColor="#2ff" stopOpacity="1"/>
        <stop offset=".6" stopColor="#2ff" stopOpacity=".85"/>
        <stop offset="1" stopColor="#2ff" stopOpacity="0"/>
      </radialGradient>
      <radialGradient id="glintB" gradientUnits="userSpaceOnUse" cx="700" cy="470" r="290">
        <stop offset="0" stopColor="#2ff" stopOpacity="1"/>
        <stop offset=".65" stopColor="#2ff" stopOpacity=".8"/>
        <stop offset="1" stopColor="#2ff" stopOpacity="0"/>
      </radialGradient>
    </defs>
    <ellipse cx="557" cy="287" rx="297" ry="232" fill="none" stroke="#2a2a2a" strokeOpacity=".6" strokeWidth="32" filter="url(#shadow)"/>
    <ellipse cx="563" cy="278.500" rx="297" ry="232.500" fill="none" stroke="#06252b" strokeWidth="31"/>
    <ellipse cx="563" cy="278.500" rx="297" ry="232.500" fill="none" stroke="#03a8a4" strokeWidth="29.500"/>
    <ellipse cx="563" cy="278.500" rx="297" ry="232.500" fill="none" stroke="#08c5bf" strokeWidth="22" filter="url(#soft)"/>
    <ellipse cx="563" cy="276" rx="292" ry="228" fill="none" stroke="url(#glintA)" strokeWidth="6" filter="url(#softer)"/>
    <ellipse cx="563" cy="281" rx="296" ry="233" fill="none" stroke="url(#glintB)" strokeWidth="6" filter="url(#softer)"/>
  </Scene>
);

const TriadMark = () => (
  <Triad width="40" height="52" viewBox="0 0 40 52">
    <path d="M29 30L17 18" stroke="#1a2a9a" strokeWidth="3.500"/><path d="M12 13l8 2-5 5z" fill="#1d2ca8"/>
    <path d="M29 30V16" stroke="#1b7a2b" strokeWidth="2.500"/><circle cx="29" cy="14" r="3.500" fill="#157025"/>
    <path d="M29 30L13 40" stroke="#c92a2a" strokeWidth="3.500"/><path d="M8 44l5-7 4 5z" fill="#e24b4b"/>
    <text x="6" y="12" fontSize="9" fontFamily="Liberation Sans" fill="#23349f">Z</text>
    <text x="26" y="9" fontSize="9" fontFamily="Liberation Sans" fill="#3b8d4a">Y</text>
    <text x="1" y="49" fontSize="9" fontFamily="Liberation Sans" fill="#cf3a3a">X</text>
  </Triad>
);

const row1 = ['gblob', '|', 'gpanel', 'ggears', 'gpins', 'gburst', 'gsketch', 'gwheel', 'gcols', 'gtable', 'gtable', '|', 'gcube', 'gcubes', '|', 'gcloud'];
const row2 = ['view', 'clipb', 'cyl', 'tree', '|', 'redtool', 'wrench'];
const row3 = ['feat', 'form', 'cols', 'redbox', 'tbolt', 'linep', 'stairs', 'blured', 'route', 'hatch', 'stop', 'bars'];
const quick = ['page', 'openf', 'save', 'print', 'undo'];
const treeRows = [
  ['hist', 'History', true], ['sens', 'Sensors'], ['annot', 'Annotations', true], ['mat', 'Material <not specified>'],
  ['plane', 'Front Plane'], ['plane', 'Top Plane'], ['plane', 'Right Plane'], ['origin', 'Origin'], ['rev', 'Revolve1', true],
];
const paneTabs = ['ptSw', 'ptHome', 'ptLib', 'ptFolder', 'ptView', 'tabDisplay', 'tabProp'];
const stripA = ['sGear', 'sHook'];
const stripB = ['sPipe', 'sMag', 'sWedge', 'sLink', 'sElbow', 'sNote', 'sValve', 'sChart'];

const Tools = ({ items }) => items.map((n, i) => n === '|'
  ? <ToolSep key={i} />
  : <ToolBtn key={i}><I n={n} /></ToolBtn>);

export default function App() {
  return (
    <Page>
      <Global />
      <Letterbox />
      <TitleBar>
        <Brand>
          <BrandMark>DS</BrandMark>
          <BrandName><b>SOLID</b>WORKS</BrandName>
        </Brand>
        <BrandHandle>▶</BrandHandle>
        <Quick>
          {quick.map(n => (
            <React.Fragment key={n}>
              <Cell><I n={n} /></Cell>
              <Cell><Caret /></Cell>
            </React.Fragment>
          ))}
          <Cell $w={19} $on><I n="cursor" /></Cell>
          <Cell $w={14}><Caret /></Cell>
          <Cell $w={20}><I n="traffic" /></Cell>
          <Cell $w={22}><I n="options" /></Cell>
          <Cell $w={21}><I n="checklist" /></Cell>
          <Cell $w={16}><Caret /></Cell>
        </Quick>
        <DocName>Part1 *</DocName>
        <TitleRight>
          <Search>
            <I n="chat" s={15} />
            <SearchText>Search Community Forum</SearchText>
            <I n="mag" s={14} />
            <Caret />
          </Search>
          <WinBtn><I n="help" s={14} /></WinBtn>
          <Cell $w={14}><Caret /></Cell>
          <WinBtn><I n="min" s={14} /></WinBtn>
          <WinBtn><I n="restore" s={14} /></WinBtn>
          <WinBtn><I n="close" s={14} /></WinBtn>
        </TitleRight>
      </TitleBar>

      <Toolbars>
        <ToolRow $w={319}><Tools items={row1} /></ToolRow>
        <ToolRow $w={152}><Tools items={row2} /></ToolRow>
        <ToolRow $w={276} $h={26} $pt={2}><Tools items={row3} /></ToolRow>
      </Toolbars>

      <Work>
        <Manager>
          <MgrTabs>
            <MgrTab $on><I n="tabFeature" /></MgrTab>
            <MgrTab><I n="tabProp" /></MgrTab>
            <MgrTab><I n="tabConf" /></MgrTab>
            <MgrTab><I n="tabDim" /></MgrTab>
            <MgrTab><I n="tabDisplay" /></MgrTab>
            <MgrMore>»</MgrMore>
          </MgrTabs>
          <Filter><I n="filter" s={12} /></Filter>
          <Tree>
            <Row $root>
              <RootIcon><I n="tabFeature" /></RootIcon>
              Part1&nbsp;&nbsp;(Default&lt;&lt;Default&gt;_Disp
            </Row>
            {treeRows.map(([n, label, exp]) => (
              <Row key={label}>
                <ExpCell>{exp && <Plus />}</ExpCell>
                <Stub />
                <RowIcon><I n={n} /></RowIcon>
                {label}
              </Row>
            ))}
          </Tree>
          <CmdBar>
            <CmdLabel>CommandManager</CmdLabel>
            <CmdIcon />
          </CmdBar>
          <Filler />
          <HScroll><Chev /><Thumb /><Chev $dir="r" /></HScroll>
        </Manager>

        <Canvas>
          <Ring />
          <HudBar>
            <HudBtn><I n="hudZoom" /></HudBtn>
            <HudBtn><I n="hudZoom2" /></HudBtn>
            <HudBtn><I n="hudPrev" /></HudBtn>
            <HudBtn><I n="hudSect" /></HudBtn>
            <HudBtn $w={20}><I n="hudOrient" /></HudBtn>
            <HudBtn $w={15}><Caret /></HudBtn>
            <HudBtn $w={20}><I n="hudCube" /></HudBtn>
            <HudBtn $w={15}><Caret /></HudBtn>
            <HudBtn $w={19}><I n="hudGlasses" /></HudBtn>
            <HudBtn $w={15}><Caret /></HudBtn>
            <HudBtn $w={21}><I n="hudBall" /></HudBtn>
            <HudBtn $w={21}><I n="hudScene" /></HudBtn>
            <HudBtn $w={16}><Caret /></HudBtn>
            <HudBtn $w={18}><I n="hudSettings" /></HudBtn>
            <HudBtn $w={15}><Caret /></HudBtn>
          </HudBar>
          <ViewCtl>
            <ViewBtn><I n="vc1" s={14} /></ViewBtn>
            <ViewBtn><I n="vc2" s={14} /></ViewBtn>
            <ViewBtn><I n="min" s={13} /></ViewBtn>
            <ViewBtn><I n="restore" s={13} /></ViewBtn>
            <ViewBtn><I n="close" s={13} /></ViewBtn>
          </ViewCtl>
          <TriadMark />
          <Notch><NotchTri /><NotchTri /><NotchTri /></Notch>
          <PaneTabs>
            {paneTabs.map((n, i) => <PaneTab key={i} $on={i === 5}><I n={n} s={17} /></PaneTab>)}
          </PaneTabs>
        </Canvas>

        <Divider />

        <Pane>
          <PaneHead>«&nbsp;L.&nbsp;<I n="mag" s={13} /></PaneHead>
          <PaneTools><I n="sPaneA" /><I n="sPaneB" /></PaneTools>
          <PaneList>
            <PaneItem>Appearances</PaneItem>
            <PaneItem>Scenes</PaneItem>
            <PaneItem>Decals</PaneItem>
          </PaneList>
          <Pager><Chev /><Chev $dir="r" /></Pager>
          <Rule />
          <PaneTitle>Defa...</PaneTitle>
          <Hint>Sel...<br />an ...</Hint>
          <Rule $mt={3} />
          <Gallery>
            <Thumbs><SwatchA /><SwatchB /></Thumbs>
            <VScroll>
              <VEnd $h={16}><Chev $dir="u" /></VEnd>
              <VTrack />
              <VEnd $h={19}><Chev $dir="d" /></VEnd>
            </VScroll>
          </Gallery>
          <Pager $h={14} $bg="transparent" $pl={3} $gap={5}><Chev /><Chev $dir="r" /></Pager>
        </Pane>

        <Strip>
          <StripTop />
          <StripDots />
          {stripA.map(n => <StripBtn key={n}><I n={n} /></StripBtn>)}
          <StripSep />
          {stripB.map(n => <StripBtn key={n}><I n={n} /></StripBtn>)}
          <StripFoot />
        </Strip>
      </Work>

      <TabBar>
        <Tabs>
          <NavArrows><NavTri /><NavTri /><NavTri $r /><NavTri $r /></NavArrows>
          <DocTab $on $w={53}>Model</DocTab>
          <DocTab $w={98}>Motion Study 1</DocTab>
        </Tabs>
        <Pager $h={14} $pl={4} $gap={18}><Chev /><Chev $dir="r" /></Pager>
      </TabBar>

      <Status>
        <StatusText>SolidWorks Premium 2014 x64 Edition</StatusText>
        <StatusUnit>MMGS</StatusUnit>
        <Caret />
        <StatusHelp>?</StatusHelp>
        <StatusTag><I n="tag" /></StatusTag>
      </Status>

      <Taskbar>
        <Start><T n="win" s={16} /></Start>
        <SearchBox><T n="search" s={16} />Type here to search</SearchBox>
        <TaskApp><T n="view" s={16} /></TaskApp>
        <TaskApp><T n="store" s={22} /></TaskApp>
        <TaskApp><T n="mail" s={23} /></TaskApp>
        <TaskApp><T n="chrome" s={22} /></TaskApp>
        <TaskApp><FaEdgeLegacy size={21} color="#0f78d4" /></TaskApp>
        <TaskApp><T n="files" s={21} /></TaskApp>
        <TaskApp $on><SwCube /></TaskApp>
        <Tray>
          <TrayBtn>
            <Svg width="14" height="14" viewBox="0 0 14 14"><path d="M2 10l5-5 5 5" fill="none" stroke="#fff" strokeWidth="1.2"/></Svg>
          </TrayBtn>
          <TrayBtn><T n="battery" s={15} /></TrayBtn>
          <TrayBtn><T n="globe" s={16} /></TrayBtn>
          <TrayBtn><T n="speaker" s={16} /></TrayBtn>
          <Clock>9:56 AM<br />17/03/2020</Clock>
          <Notify><T n="notif" s={18} /><NotifyBadge>3</NotifyBadge></Notify>
        </Tray>
      </Taskbar>
      <Letterbox />
    </Page>
  );
}
